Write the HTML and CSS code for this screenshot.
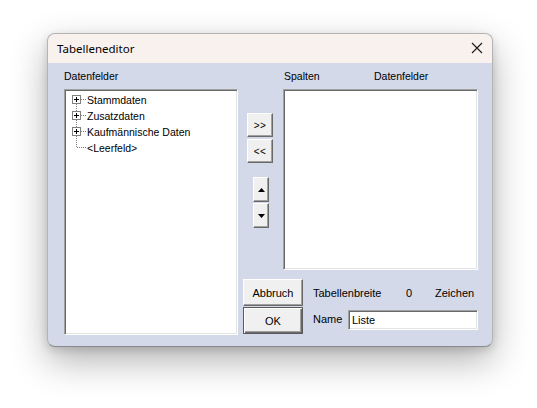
FILE: index.html
```html
<!DOCTYPE html>
<html lang="de">
<head>
<meta charset="utf-8">
<title>Tabelleneditor</title>
<link rel="stylesheet" href="styles.css">
</head>
<body>
<div class="window">
  <div class="titlebar">
    <span class="title">Tabelleneditor</span>
    <svg class="close" width="12" height="12" viewBox="0 0 12 12"><path d="M1 1L11 11M11 1L1 11" stroke="#1a1a1a" stroke-width="1.1" fill="none"/></svg>
  </div>
  <div class="client">
    <div class="leftcol">
      <div class="label">Datenfelder</div>
      <div class="field tree">
        <div class="node">
          <svg class="conn" width="20" height="16" viewBox="0 0 20 16"><rect x="5.5" y="3.5" width="8" height="8" fill="#fff" stroke="#808080"/><path d="M7 7.5H12M9.5 5V10" stroke="#000"/><path d="M14 7.5H20M9.5 12V16" stroke="#808080" stroke-dasharray="1 1"/></svg>
          <span>Stammdaten</span>
        </div>
        <div class="node">
          <svg class="conn" width="20" height="16" viewBox="0 0 20 16"><path d="M9.5 0V3M9.5 12V16M14 7.5H20" stroke="#808080" stroke-dasharray="1 1"/><rect x="5.5" y="3.5" width="8" height="8" fill="#fff" stroke="#808080"/><path d="M7 7.5H12M9.5 5V10" stroke="#000"/></svg>
          <span>Zusatzdaten</span>
        </div>
        <div class="node">
          <svg class="conn" width="20" height="16" viewBox="0 0 20 16"><path d="M9.5 0V3M9.5 12V16M14 7.5H20" stroke="#808080" stroke-dasharray="1 1"/><rect x="5.5" y="3.5" width="8" height="8" fill="#fff" stroke="#808080"/><path d="M7 7.5H12M9.5 5V10" stroke="#000"/></svg>
          <span>Kaufmännische Daten</span>
        </div>
        <div class="node">
          <svg class="conn" width="20" height="16" viewBox="0 0 20 16"><path d="M9.5 0V7.5H20" stroke="#808080" stroke-dasharray="1 1" fill="none"/></svg>
          <span>&lt;Leerfeld&gt;</span>
        </div>
      </div>
    </div>
    <div class="rightsec">
      <div class="toprow">
        <div class="midcol">
          <button class="btn btn-move">&gt;&gt;</button>
          <button class="btn btn-move">&lt;&lt;</button>
          <div class="updown">
            <button class="btn btn-arrow"><svg width="7" height="4" viewBox="0 0 7 4"><path d="M3.5 0L7 4H0Z" fill="#000"/></svg></button>
            <button class="btn btn-arrow"><svg width="7" height="4" viewBox="0 0 7 4"><path d="M0 0H7L3.5 4Z" fill="#000"/></svg></button>
          </div>
        </div>
        <div class="rcol">
          <div class="label labels2"><span class="l-spalten">Spalten</span><span>Datenfelder</span></div>
          <div class="field cols"></div>
        </div>
      </div>
      <div class="bottomrow">
        <div class="btncol">
          <button class="btn btn-cmd">Abbruch</button>
          <button class="btn btn-cmd btn-default">OK</button>
        </div>
        <div class="info">
          <div class="inforow">
            <span class="i-breite">Tabellenbreite</span>
            <span class="i-zero">0</span>
            <span>Zeichen</span>
          </div>
          <div class="inforow namerow">
            <span class="i-name">Name</span>
            <div class="field namefield">Liste</div>
          </div>
        </div>
      </div>
    </div>
  </div>
</div>
</body>
</html>
```
FILE: styles.css
```css
html, body {
  margin: 0;
  padding: 0;
  background: #ffffff;
}
body {
  padding: 33px 0 0 47px;
  min-height: 408px;
  box-sizing: border-box;
  font-family: "Liberation Sans", Arial, sans-serif;
  font-size: 10.5px;
  color: #000;
}
.window {
  box-sizing: border-box;
  width: 446px;
  height: 314px;
  border: 1px solid #b4b4b4;
  border-bottom-color: #8a8a8a;
  border-radius: 8px;
  overflow: hidden;
  background: #d4d9e9;
  box-shadow: 0 14px 36px rgba(0,0,0,0.30), 0 3px 8px rgba(0,0,0,0.14);
}
.titlebar {
  height: 29px;
  background: #f9f1ed;
  display: flex;
  align-items: center;
  justify-content: space-between;
  padding: 0 9px 0 9px;
}
.title {
  font-family: "Noto Sans", "Open Sans", sans-serif;
  font-size: 11.5px;
  color: #000;
  margin-top: -1px;
}
.close {
  margin-top: -2px;
}
.client {
  display: flex;
  padding: 7px 14px 0 16px;
}
.label {
  height: 13px;
  line-height: 13px;
  white-space: nowrap;
}
.leftcol {
  width: 174px;
}
.field {
  box-sizing: border-box;
  background: #fff;
  border: 1px solid;
  border-color: #a0a0a0 #ffffff #ffffff #a0a0a0;
  box-shadow: inset 1px 1px 0 #696969, inset -1px -1px 0 #e3e3e3;
}
.tree {
  margin-top: 6px;
  height: 246px;
  padding: 2px 0 0 2px;
}
.node {
  display: flex;
  align-items: center;
  height: 16px;
  line-height: 16px;
  white-space: nowrap;
}
.conn {
  display: block;
  flex: none;
  margin-right: 0;
}
.rightsec {
  width: 235px;
  margin-left: 5px;
}
.toprow {
  display: flex;
}
.midcol {
  width: 40px;
  display: flex;
  flex-direction: column;
  align-items: flex-start;
  padding-top: 43px;
}
.btn {
  box-sizing: border-box;
  margin: 0;
  padding: 0;
  font-family: "Liberation Sans", Arial, sans-serif;
  font-size: 10.5px;
  color: #000;
  background: #f0f0f0;
  border: 1px solid;
  border-color: #ffffff #696969 #696969 #ffffff;
  box-shadow: inset -1px -1px 0 #a0a0a0;
  display: flex;
  align-items: center;
  justify-content: center;
}
.btn-move {
  width: 26px;
  height: 24px;
  margin-left: 4px;
  margin-bottom: 2px;
  font-size: 10px;
  letter-spacing: 0.5px;
}
.updown {
  margin-top: 12px;
  margin-left: 10px;
  display: flex;
  flex-direction: column;
  gap: 1px;
}
.btn-arrow {
  width: 16px;
  height: 25px;
}
.btn-arrow svg {
  display: block;
}
.rcol {
  width: 195px;
}
.labels2 {
  padding-left: 1px;
  display: flex;
}
.l-spalten {
  width: 90px;
}
.cols {
  margin-top: 6px;
  height: 181px;
}
.bottomrow {
  display: flex;
  margin-top: 9px;
}
.btncol {
  width: 60px;
  display: flex;
  flex-direction: column;
  gap: 1px;
}
.btn-cmd {
  width: 60px;
  height: 27px;
  font-size: 11px;
}
.btn-default {
  border: 1px solid #5a5a5a;
  box-shadow: inset 1px 1px 0 #ffffff, inset -1px -1px 0 #696969, inset -2px -2px 0 #a0a0a0;
}
.info {
  margin-left: 10px;
  width: 165px;
}
.inforow {
  display: flex;
  align-items: center;
  height: 28px;
  white-space: nowrap;
  font-size: 11px;
}
.i-breite {
  width: 93px;
}
.i-zero {
  width: 29px;
}
.namerow {
  height: 26px;
}
.i-name {
  width: 35px;
  margin-top: -3px;
}
.namefield {
  width: 130px;
  height: 20px;
  line-height: 18px;
  padding-left: 3px;
  font-size: 11px;
}
```
